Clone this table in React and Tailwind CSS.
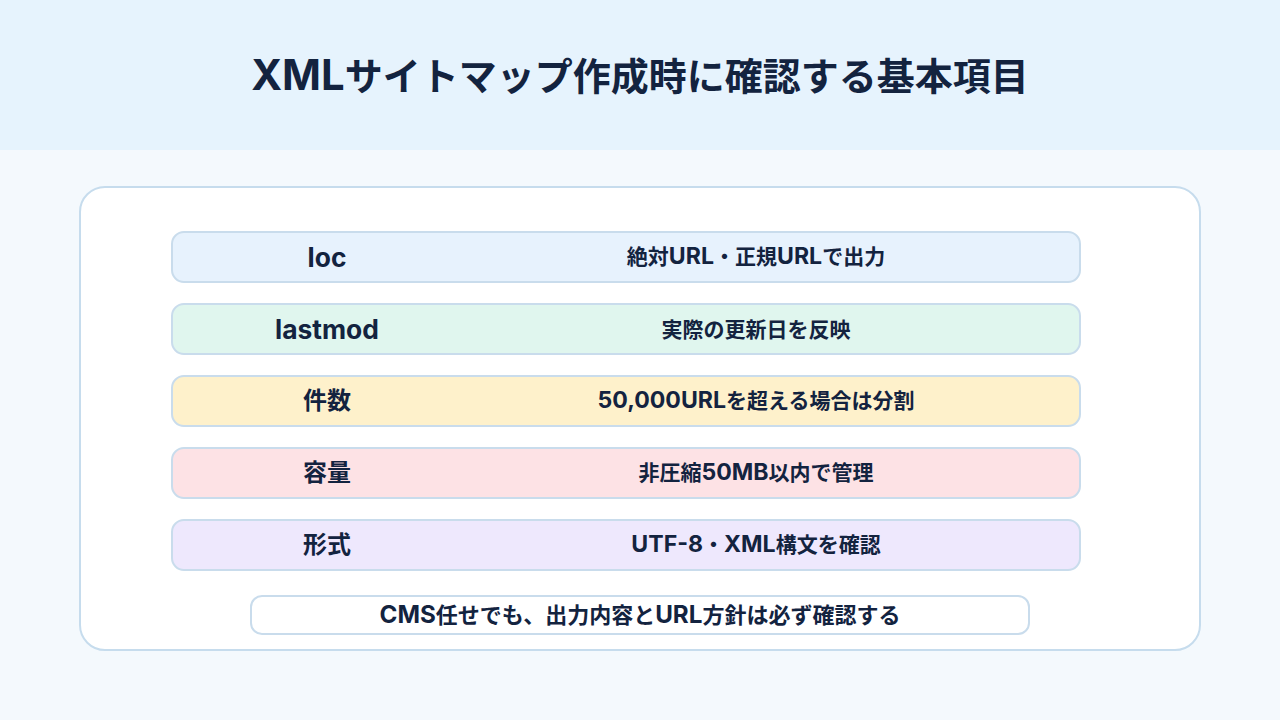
import React from 'react';

const rows = [
  { label: 'loc', text: '絶対URL・正規URLで出力', bg: 'bg-[#e7f2fd]' },
  { label: 'lastmod', text: '実際の更新日を反映', bg: 'bg-[#e0f6ee]' },
  { label: '件数', text: '50,000URLを超える場合は分割', bg: 'bg-[#fef1cb]' },
  { label: '容量', text: '非圧縮50MB以内で管理', bg: 'bg-[#fde2e5]' },
  { label: '形式', text: 'UTF-8・XML構文を確認', bg: 'bg-[#eee8fd]' },
];

// latin runs render a bit larger than the japanese glyphs around them
const Mixed = ({ text }) =>
  text.split(/([A-Za-z0-9,\-]+)/).map((part, i) =>
    /^[A-Za-z0-9,\-]+$/.test(part) ? (
      <span key={i} className="text-[1.1em]">
        {part}
      </span>
    ) : (
      <React.Fragment key={i}>{part}</React.Fragment>
    )
  );

const App = () => {
  return (
    <div
      className="w-[1280px] h-[720px] flex flex-col bg-[#f4f9fd] text-[#13233f]"
      style={{ fontFamily: 'Inter, "Noto Sans CJK JP", sans-serif' }}
    >
      <div className="h-[150px] bg-[#e6f3fd] flex items-center justify-center pt-[2px]">
        <h1 className="text-[38px] font-bold leading-none">
          <Mixed text="XMLサイトマップ作成時に確認する基本項目" />
        </h1>
      </div>

      <div className="flex-1 px-[79px] pt-[36px]">
        <div className="h-[465px] bg-white border-2 border-[#c6dced] rounded-[26px] flex flex-col pt-[43px]">
          <div className="ml-[90px] w-[910px] flex flex-col gap-[20px]">
            {rows.map((row) => (
              <div
                key={row.label}
                className={`h-[52px] flex items-center px-6 rounded-[13px] border-2 border-[#c9dcec] ${row.bg}`}
              >
                <div className="w-[260px] text-center text-[24px] font-bold leading-none">
                  <Mixed text={row.label} />
                </div>
                <div className="flex-1 text-center text-[21px] font-bold leading-none">
                  <Mixed text={row.text} />
                </div>
              </div>
            ))}
          </div>

          <div className="mt-[24px] self-center w-[780px] h-[40px] flex items-center justify-center border-2 border-[#c9dcec] rounded-[12px] bg-white">
            <span className="text-[22px] font-bold leading-none">
              <Mixed text="CMS任せでも、出力内容とURL方針は必ず確認する" />
            </span>
          </div>
        </div>
      </div>
    </div>
  );
};

export default App;
